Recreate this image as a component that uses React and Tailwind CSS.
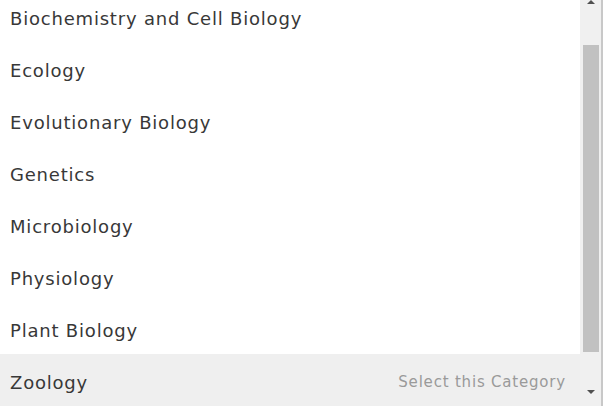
import React from 'react';

const items = [
    'Biochemistry and Cell Biology',
    'Ecology',
    'Evolutionary Biology',
    'Genetics',
    'Microbiology',
    'Physiology',
    'Plant Biology',
    'Zoology',
];

export default function App() {
    return (
        <div className="w-[603px] h-[406px] overflow-hidden bg-white flex font-['DejaVu_Sans',Verdana,sans-serif] text-[#383838]">
            <div className="flex-1 overflow-hidden">
                <ul className="-mt-[10px]">
                    {items.map((item, i) => (
                        <li key={item} className={`h-[52px] pl-[10px] pr-[14px] pt-[4px] flex items-center justify-between ${i === items.length - 1 ? 'bg-[#efefef]' : ''}`}>
                            <span className="text-[18px] tracking-[0.8px]">{item}</span>
                            {i === items.length - 1 && <span className="text-[15px] tracking-[0.8px] text-[#9a9a9a]">Select this Category</span>}
                        </li>
                    ))}
                </ul>
            </div>
            {/* scrollbar */}
            <div className="w-[23px] h-full bg-[#f0f0f0] border-r-2 border-[#c8c8c8] flex flex-col items-center">
                <div className="h-[8px] w-full flex justify-center items-start">
                    <svg width="8" height="4" viewBox="0 0 8 4"><path d="M0 4 L4 0 L8 4 Z" fill="#505050" /></svg>
                </div>
                <div className="mt-[37px] w-[16px] h-[307px] bg-[#c1c1c1]" />
                <div className="flex-1" />
                <div className="h-[16px] w-full flex justify-center">
                    <svg width="8" height="4" viewBox="0 0 8 4"><path d="M0 0 L8 0 L4 4 Z" fill="#505050" /></svg>
                </div>
            </div>
        </div>
    );
}
